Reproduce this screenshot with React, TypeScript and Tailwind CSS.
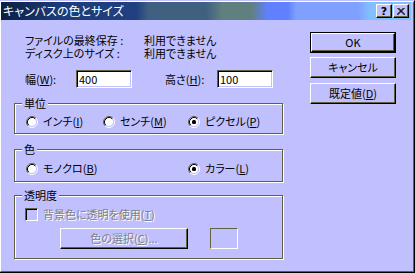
import React from "react";

const Radio = ({ checked }: { checked?: boolean }) => (
  <svg width="12" height="12" viewBox="0 0 12 12" className="shrink-0">
    <circle cx="6" cy="6" r="4.5" fill="#ffffff" />
    <path d="M2.11 9.89 A5.5 5.5 0 0 1 9.89 2.11" stroke="#63603f" fill="none" />
    <path d="M9.89 2.11 A5.5 5.5 0 0 1 2.11 9.89" stroke="#ffffff" fill="none" />
    <path d="M2.82 9.18 A4.5 4.5 0 0 1 9.18 2.82" stroke="#000000" fill="none" />
    <path d="M9.18 2.82 A4.5 4.5 0 0 1 2.82 9.18" stroke="#c0c0ff" fill="none" />
    {checked && <rect x="4" y="4" width="4" height="4" rx="1.5" fill="#000000" />}
  </svg>
);

const RadioItem = ({
  checked,
  label,
  className,
}: {
  checked?: boolean;
  label: React.ReactNode;
  className?: string;
}) => (
  <div className={`flex items-center ${className ?? ""}`}>
    <Radio checked={checked} />
    <span className="ml-[5px] leading-[13px]">{label}</span>
  </div>
);

const Group = ({
  title,
  titleWidth,
  className,
  children,
}: {
  title: string;
  titleWidth?: string;
  className?: string;
  children: React.ReactNode;
}) => (
  <div
    className={`relative w-[269px] border border-[#63603f] shadow-[inset_1px_1px_0_#ffffff,1px_1px_0_#ffffff] ${className ?? ""}`}
  >
    <span
      className={`absolute -top-[8px] left-[7px] bg-[#c0c0ff] px-[2px] leading-[14px] ${titleWidth ?? ""}`}
    >
      {title}
    </span>
    {children}
  </div>
);

const Button = ({
  children,
  isDefault,
  disabled,
  className,
}: {
  children: React.ReactNode;
  isDefault?: boolean;
  disabled?: boolean;
  className?: string;
}) => {
  const face = (
    <div
      className={`flex h-full w-full items-center justify-center border border-t-white border-l-white border-r-black border-b-black shadow-[inset_-1px_-1px_0_#63603f] ${
        disabled ? "text-[#808080] [text-shadow:1px_1px_0_#ffffff]" : "text-black"
      }`}
    >
      {children}
    </div>
  );
  return (
    <div className={`${isDefault ? "border border-black" : ""} ${className ?? ""}`}>
      {face}
    </div>
  );
};

const Input = ({ value }: { value: string }) => (
  <div className="flex h-[18px] w-[56px] items-center border border-t-[#63603f] border-l-[#63603f] border-r-white border-b-white bg-white pl-[2px] leading-[14px] text-black shadow-[inset_1px_1px_0_#000000,inset_-1px_-1px_0_#c0c0ff]">
    {value}
  </div>
);

export default function App() {
  return (
    <div className="h-[273px] w-[415px] font-['Noto_Sans_CJK_JP','Noto_Sans_CJK_SC',sans-serif] text-[11px] text-black [font-feature-settings:'palt']">
      <div className="h-full w-full border-t border-r border-b border-t-[#c0c0ff] border-r-black border-b-black bg-[#c0c0ff]">
        <div className="flex h-full w-full flex-col border-t border-l border-r border-b border-t-white border-l-white border-r-[#63603f] border-b-[#63603f] pr-[2px]">
          {/* title bar */}
          <div className="flex h-[18px] items-center bg-[linear-gradient(to_right,#0a1f40_0%,#1d3b78_14%,#204080_33%,#406080_36%,#406080_50%,#608080_54%,#608080_61%,#6080ff_65%,#6080ff_70%,#80a0ff_72%,#80a0ff_87%,#80c0ff_90%,#80c0ff_100%)] pl-[2px] pr-[2px]">
            <span className="text-[12px] leading-[18px] text-white">
              キャンバスの色とサイズ
            </span>
            <div className="ml-auto flex">
              <div className="flex h-[14px] w-[16px] items-center justify-center border border-t-white border-l-white border-r-black border-b-black bg-[#c0c0ff] font-['DejaVu_Sans',sans-serif] text-[11px] font-bold leading-none shadow-[inset_-1px_-1px_0_#63603f]">
                ?
              </div>
              <div className="ml-[1px] flex h-[14px] w-[16px] items-center justify-center border border-t-white border-l-white border-r-black border-b-black bg-[#c0c0ff] shadow-[inset_-1px_-1px_0_#63603f]">
                <svg width="8" height="7" viewBox="0 0 8 7">
                  <path d="M0.5 0 L7.5 7 M1.5 0 L8.5 7 M7.5 0 L0.5 7 M6.5 0 L-0.5 7" stroke="#000" strokeWidth="1" />
                </svg>
              </div>
            </div>
          </div>

          {/* body */}
          <div className="flex">
            <div className="ml-[13px] flex w-[270px] flex-col">
              <div className="mt-[14px] pl-[11px] leading-[13px]">
                <div className="flex">
                  <span className="w-[119px]">ファイルの最終保存 :</span>
                  <span>利用できません</span>
                </div>
                <div className="flex">
                  <span className="w-[119px]">ディスク上のサイズ :</span>
                  <span>利用できません</span>
                </div>
              </div>

              <div className="mt-[10px] flex items-center pl-[11px]">
                <span className="w-[51px]">
                  幅(<u>W</u>):
                </span>
                <Input value="400" />
                <span className="ml-[33px] w-[52px]">
                  高さ(<u>H</u>):
                </span>
                <Input value="100" />
              </div>

              <Group title="単位" className="mt-[15px] h-[31px]">
                <div className="mt-[11px] flex pl-[11px]">
                  <RadioItem className="w-[77px]" label={<>インチ(<u>I</u>)</>} />
                  <RadioItem className="w-[85px]" label={<>センチ(<u>M</u>)</>} />
                  <RadioItem checked label={<>ピクセル(<u>P</u>)</>} />
                </div>
              </Group>

              <Group title="色" className="mt-[15px] h-[33px]">
                <div className="mt-[12px] flex pl-[11px]">
                  <RadioItem className="w-[162px]" label={<>モノクロ(<u>B</u>)</>} />
                  <RadioItem checked label={<>カラー(<u>L</u>)</>} />
                </div>
              </Group>

              <Group title="透明度" className="mt-[13px] h-[64px]">
                <div className="mt-[12px] flex items-center pl-[10px]">
                  <div className="h-[13px] w-[13px] border border-t-[#63603f] border-l-[#63603f] border-r-white border-b-white shadow-[inset_1px_1px_0_#000000]" />
                  <span className="ml-[5px] leading-[13px] text-[#808080] [text-shadow:1px_1px_0_#ffffff]">
                    背景色に透明を使用(<u>T</u>)
                  </span>
                </div>
                <div className="mt-[7px] flex pl-[45px]">
                  <Button disabled className="h-[21px] w-[128px]">
                    色の選択(<u>C</u>)...
                  </Button>
                  <div className="ml-[22px] h-[21px] w-[28px] border border-t-[#63603f] border-l-[#63603f] border-r-white border-b-white" />
                </div>
              </Group>
            </div>

            <div className="ml-[26px] flex flex-col">
              <Button isDefault className="mt-[12px] h-[21px] w-[86px]">
                OK
              </Button>
              <Button className="mt-[4px] h-[21px] w-[86px]">キャンセル</Button>
              <Button className="mt-[5px] h-[21px] w-[86px]">
                既定値(<u>D</u>)
              </Button>
            </div>
          </div>
        </div>
      </div>
    </div>
  );
}
